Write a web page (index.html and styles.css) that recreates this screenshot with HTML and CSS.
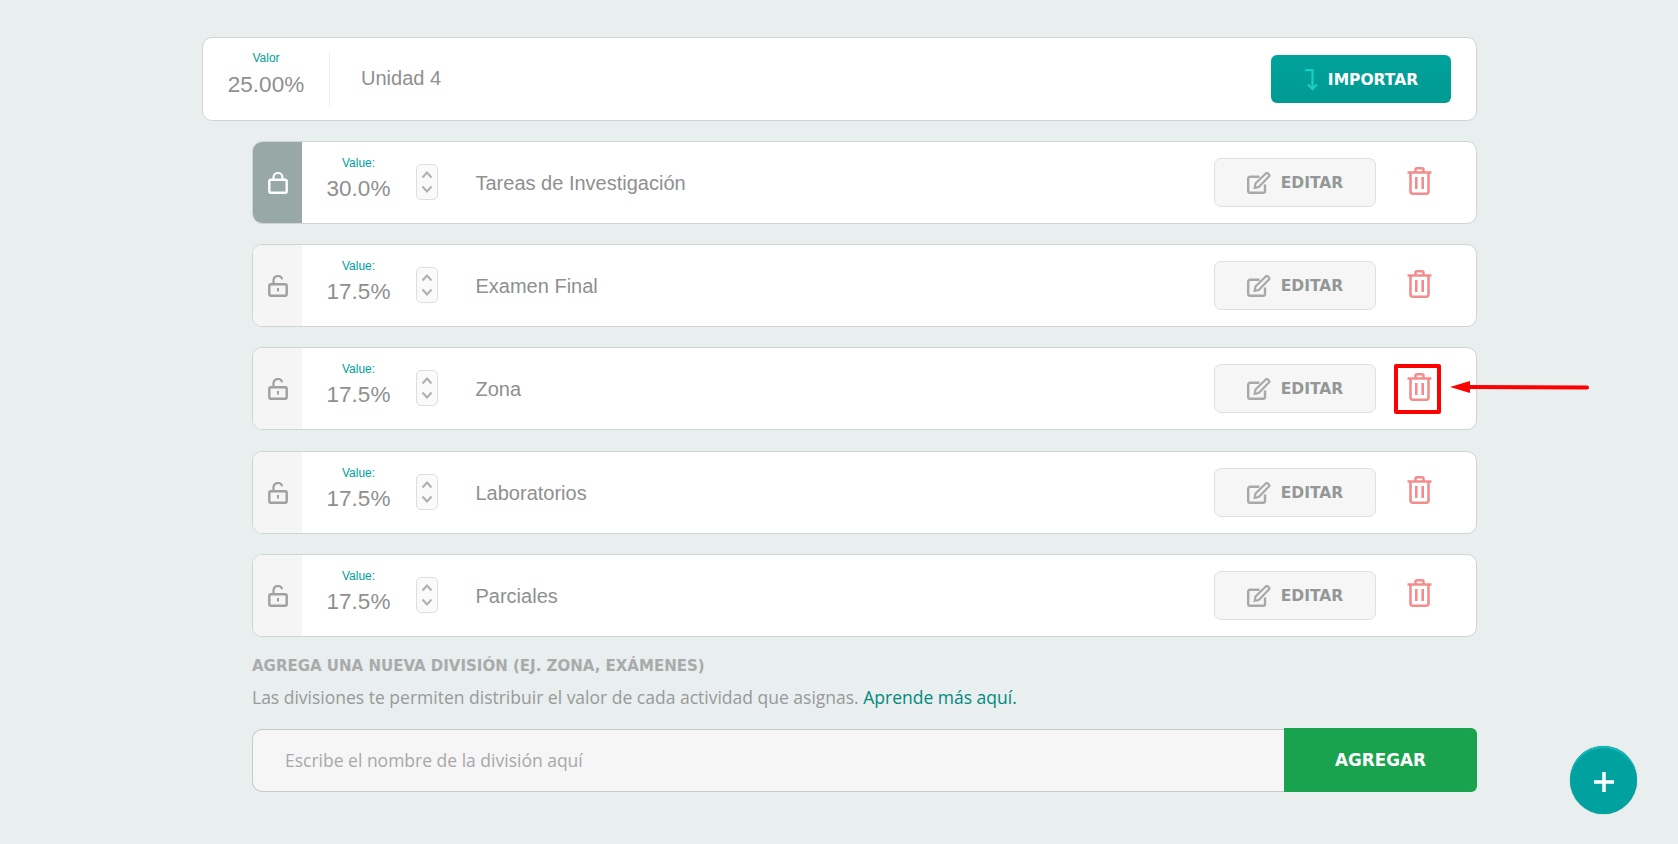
FILE: index.html
```html
<!DOCTYPE html>
<html lang="es">
<head>
    <meta charset="UTF-8">
    <title>Unidad 4</title>
    <link rel="stylesheet" href="styles.css">
</head>
<body>

    <svg width="0" height="0" class="defs">
        <symbol id="lock-closed" viewBox="0 0 20 22">
            <path d="M5.500 8V5.500a4.500 4.500 0 0 1 9 0V8" fill="none" stroke="currentColor" stroke-width="2.200"/>
            <rect x="1.300" y="7.800" width="17.400" height="12.900" rx="1.500" fill="none" stroke="currentColor" stroke-width="2.400"/>
        </symbol>
        <symbol id="lock-open" viewBox="0 0 20 22">
            <path d="M5.500 9V5.500a4.500 4.500 0 0 1 8.800-1.300" fill="none" stroke="currentColor" stroke-width="2.200"/>
            <rect x="1.300" y="9.300" width="17.400" height="11.400" rx="1.500" fill="none" stroke="currentColor" stroke-width="2.400"/>
            <rect x="9" y="13" width="2" height="3.500" fill="currentColor"/>
        </symbol>
        <symbol id="updown" viewBox="0 0 12 26">
            <path d="M1.500 8.500 6 3.500l4.500 5M1.500 17.500 6 22.500l4.500-5" fill="none" stroke="currentColor" stroke-width="2"/>
        </symbol>
        <symbol id="edit" viewBox="0 0 24 22">
            <path d="M18 12.500V19a1.800 1.800 0 0 1-1.800 1.800H3A1.800 1.800 0 0 1 1.200 19V6.500A1.800 1.800 0 0 1 3 4.700h9.500" fill="none" stroke="currentColor" stroke-width="2.400"/>
            <path d="M8.500 11.500 18.800 1.500a1.500 1.500 0 0 1 2.100 0l1 1a1.500 1.500 0 0 1 0 2.100L11.700 15l-4 .8z" fill="none" stroke="currentColor" stroke-width="2.200"/>
        </symbol>
        <symbol id="trash" viewBox="0 0 25 28">
            <path d="M.5 5.500h24M8.500 5V2.700A1.500 1.500 0 0 1 10 1.200h5a1.500 1.500 0 0 1 1.500 1.500V5" fill="none" stroke="currentColor" stroke-width="2.500"/>
            <path d="M3.500 5.500V24.500A2.300 2.300 0 0 0 5.800 26.700H19.200A2.300 2.300 0 0 0 21.500 24.500V5.500" fill="none" stroke="currentColor" stroke-width="2.600"/>
            <path d="M9.300 10v12M15.700 10v12" fill="none" stroke="currentColor" stroke-width="2.600"/>
        </symbol>
    </svg>

    <div class="wrap">
        <div class="unit">
            <div class="unit-value">
                <div class="label">Valor</div>
                <div class="number">25.00%</div>
            </div>
            <div class="unit-name">Unidad 4</div>
            <button class="import-button">
                <svg class="import-icon" viewBox="0 0 14 22"><path d="M1 1.200h7.500V20M4 15.500 8.500 20l4.500-4.500" fill="none" stroke="currentColor" stroke-width="2.200"/></svg>
                IMPORTAR
            </button>
        </div>

        <div class="division">
            <div class="lock locked"><svg><use href="#lock-closed"/></svg></div>
            <div class="value">
                <div class="label">Value:</div>
                <div class="number">30.0%</div>
            </div>
            <div class="stepper"><svg><use href="#updown"/></svg></div>
            <div class="name">Tareas de Investigación</div>
            <button class="edit-button"><svg><use href="#edit"/></svg>EDITAR</button>
            <div class="delete"><svg><use href="#trash"/></svg></div>
        </div>

        <div class="division">
            <div class="lock"><svg><use href="#lock-open"/></svg></div>
            <div class="value">
                <div class="label">Value:</div>
                <div class="number">17.5%</div>
            </div>
            <div class="stepper"><svg><use href="#updown"/></svg></div>
            <div class="name">Examen Final</div>
            <button class="edit-button"><svg><use href="#edit"/></svg>EDITAR</button>
            <div class="delete"><svg><use href="#trash"/></svg></div>
        </div>

        <div class="division">
            <div class="lock"><svg><use href="#lock-open"/></svg></div>
            <div class="value">
                <div class="label">Value:</div>
                <div class="number">17.5%</div>
            </div>
            <div class="stepper"><svg><use href="#updown"/></svg></div>
            <div class="name">Zona</div>
            <button class="edit-button"><svg><use href="#edit"/></svg>EDITAR</button>
            <div class="delete marked">
                <svg><use href="#trash"/></svg>
                <div class="mark-box"></div>
                <svg class="mark-arrow" viewBox="0 0 140 20"><path d="M0 10 20 4v4l117 .5a2 2 0 0 1 0 4L20 12v4z" fill="#f00"/></svg>
            </div>
        </div>

        <div class="division">
            <div class="lock"><svg><use href="#lock-open"/></svg></div>
            <div class="value">
                <div class="label">Value:</div>
                <div class="number">17.5%</div>
            </div>
            <div class="stepper"><svg><use href="#updown"/></svg></div>
            <div class="name">Laboratorios</div>
            <button class="edit-button"><svg><use href="#edit"/></svg>EDITAR</button>
            <div class="delete"><svg><use href="#trash"/></svg></div>
        </div>

        <div class="division">
            <div class="lock"><svg><use href="#lock-open"/></svg></div>
            <div class="value">
                <div class="label">Value:</div>
                <div class="number">17.5%</div>
            </div>
            <div class="stepper"><svg><use href="#updown"/></svg></div>
            <div class="name">Parciales</div>
            <button class="edit-button"><svg><use href="#edit"/></svg>EDITAR</button>
            <div class="delete"><svg><use href="#trash"/></svg></div>
        </div>

        <div class="new-division">
            <h2 class="new-title">AGREGA UNA NUEVA DIVISIÓN (EJ. ZONA, EXÁMENES)</h2>
            <p class="new-text">Las divisiones te permiten distribuir el valor de cada actividad que asignas. <a href="#">Aprende más aquí.</a></p>
            <div class="new-form">
                <div class="new-input">Escribe el nombre de la división aquí</div>
                <button class="add-button">AGREGAR</button>
            </div>
        </div>
    </div>

    <button class="fab">
        <svg viewBox="0 0 20 20"><path d="M10 0v20M0 10h20" stroke="#fff" stroke-width="3.500"/></svg>
    </button>

</body>
</html>
```

FILE: styles.css
```css
body {
    font-family: "Liberation Sans", Arial, sans-serif;
    background-color: #e9eeee;
    margin: 0;
    padding: 0;
    height: 844px;
    overflow: hidden;
    position: relative;
    color: #8f8f8f;
}
button {
    font-family: "DejaVu Sans", sans-serif;
    font-weight: 700;
    border: none;
    padding: 0;
}
.defs {
    display: block;
    height: 0;
}
.wrap {
    width: 1275px;
    margin-left: 202px;
    padding-top: 37px;
}
.label {
    color: #00a19a;
    font-size: 12px;
    line-height: 14px;
    margin-bottom: 5px;
}
.number {
    font-size: 22.500px;
    line-height: 28px;
}

.unit {
    display: flex;
    align-items: center;
    height: 84px;
    box-sizing: border-box;
    background-color: white;
    border: 1px solid #cfd4d4;
    border-radius: 10px;
    margin-bottom: 20px;
}
.unit-value {
    width: 127px;
    height: 56px;
    box-sizing: border-box;
    border-right: 1px solid #f0f0f0;
    text-align: center;
}
.unit-value .label {
    margin-bottom: 6px;
}
.unit-name {
    flex: 1;
    font-size: 20px;
    margin: -2px 0 0 31px;
}
.import-button {
    display: flex;
    align-items: center;
    justify-content: center;
    gap: 10px;
    width: 180px;
    height: 48px;
    margin-right: 25px;
    padding-top: 2px;
    border-radius: 6px;
    background: linear-gradient(#00a29a, #009a92);
    color: white;
    font-size: 15.500px;
}
.import-icon {
    width: 14px;
    height: 22px;
    color: #16cfc6;
}

.division {
    display: flex;
    align-items: center;
    height: 83px;
    box-sizing: border-box;
    margin-left: 50px;
    margin-bottom: 20.200px;
    background-color: white;
    border: 1px solid #cfd4d4;
    border-radius: 10px;
}
.lock {
    display: flex;
    align-items: center;
    justify-content: center;
    align-self: stretch;
    width: 49px;
    flex: none;
    background-color: #f5f5f5;
    border-radius: 9px 0 0 9px;
    color: #a0a0a0;
}
.lock svg {
    width: 20px;
    height: 22px;
    margin-top: 1px;
}
.lock.locked {
    background-color: #98a8a6;
    color: white;
}
.value {
    align-self: flex-start;
    width: 113px;
    flex: none;
    box-sizing: border-box;
    padding-top: 14px;
    text-align: center;
}
.stepper {
    display: flex;
    align-items: center;
    justify-content: center;
    width: 20px;
    height: 34px;
    flex: none;
    margin: -1px 0 0 1px;
    border: 1px solid #dedede;
    border-radius: 5px;
    background-color: #fafafa;
    color: #b0b0b0;
}
.stepper svg {
    width: 12px;
    height: 26px;
}
.name {
    flex: 1;
    font-size: 20px;
    margin: 2px 0 0 37.500px;
}
.edit-button {
    display: flex;
    align-items: center;
    justify-content: center;
    gap: 10px;
    width: 162px;
    height: 49px;
    box-sizing: border-box;
    padding-top: 1px;
    border: 1px solid #e0e0e0;
    border-radius: 7px;
    background-color: #f6f6f6;
    color: #939795;
    font-size: 15.500px;
}
.edit-button svg {
    width: 24px;
    height: 22px;
    color: #a8a8a8;
}
.delete {
    position: relative;
    display: flex;
    justify-content: center;
    width: 25px;
    margin: -4px 44px 0 31px;
    color: #f38d8d;
}
.delete svg {
    width: 25px;
    height: 30px;
}
.mark-box {
    position: absolute;
    left: -13px;
    top: -8px;
    width: 47px;
    height: 50px;
    box-sizing: border-box;
    border: 4px solid #f00;
    border-radius: 2px;
}
.delete .mark-arrow {
    position: absolute;
    left: 43px;
    top: 5px;
    width: 140px;
    height: 20px;
}

.new-division {
    margin-left: 50px;
    margin-top: -1px;
}
.new-title {
    margin: 0;
    font-family: "DejaVu Sans", sans-serif;
    font-size: 15px;
    line-height: 20px;
    font-weight: 700;
    color: #a9abab;
}
.new-text {
    margin: 9px 0 0;
    font-family: "Open Sans", sans-serif;
    font-size: 17.500px;
    line-height: 24px;
    color: #979a9a;
}
.new-text a {
    color: #00897f;
    text-decoration: none;
}
.new-form {
    display: flex;
    margin-top: 19px;
}
.new-input {
    flex: 1;
    align-self: flex-end;
    height: 63px;
    box-sizing: border-box;
    border: 1px solid #c6caca;
    border-right: none;
    border-radius: 10px 0 0 10px;
    background-color: #f6f6f6;
    padding-left: 32px;
    font-family: "Open Sans", sans-serif;
    font-size: 17.500px;
    line-height: 60px;
    color: #a8a8a8;
}
.add-button {
    width: 193px;
    height: 64px;
    border-radius: 0 6px 6px 0;
    background-color: #19a34e;
    color: white;
    font-size: 16.800px;
}
.fab {
    position: absolute;
    left: 1570px;
    top: 746px;
    width: 67px;
    height: 68px;
    display: flex;
    align-items: center;
    justify-content: center;
    border-radius: 50%;
    background-color: #00a19f;
    box-shadow: inset 0 2px 1px #16b9c0, 0 0 1px #067d7b;
}
.fab svg {
    width: 20px;
    height: 20px;
    margin-top: 3px;
}
```
